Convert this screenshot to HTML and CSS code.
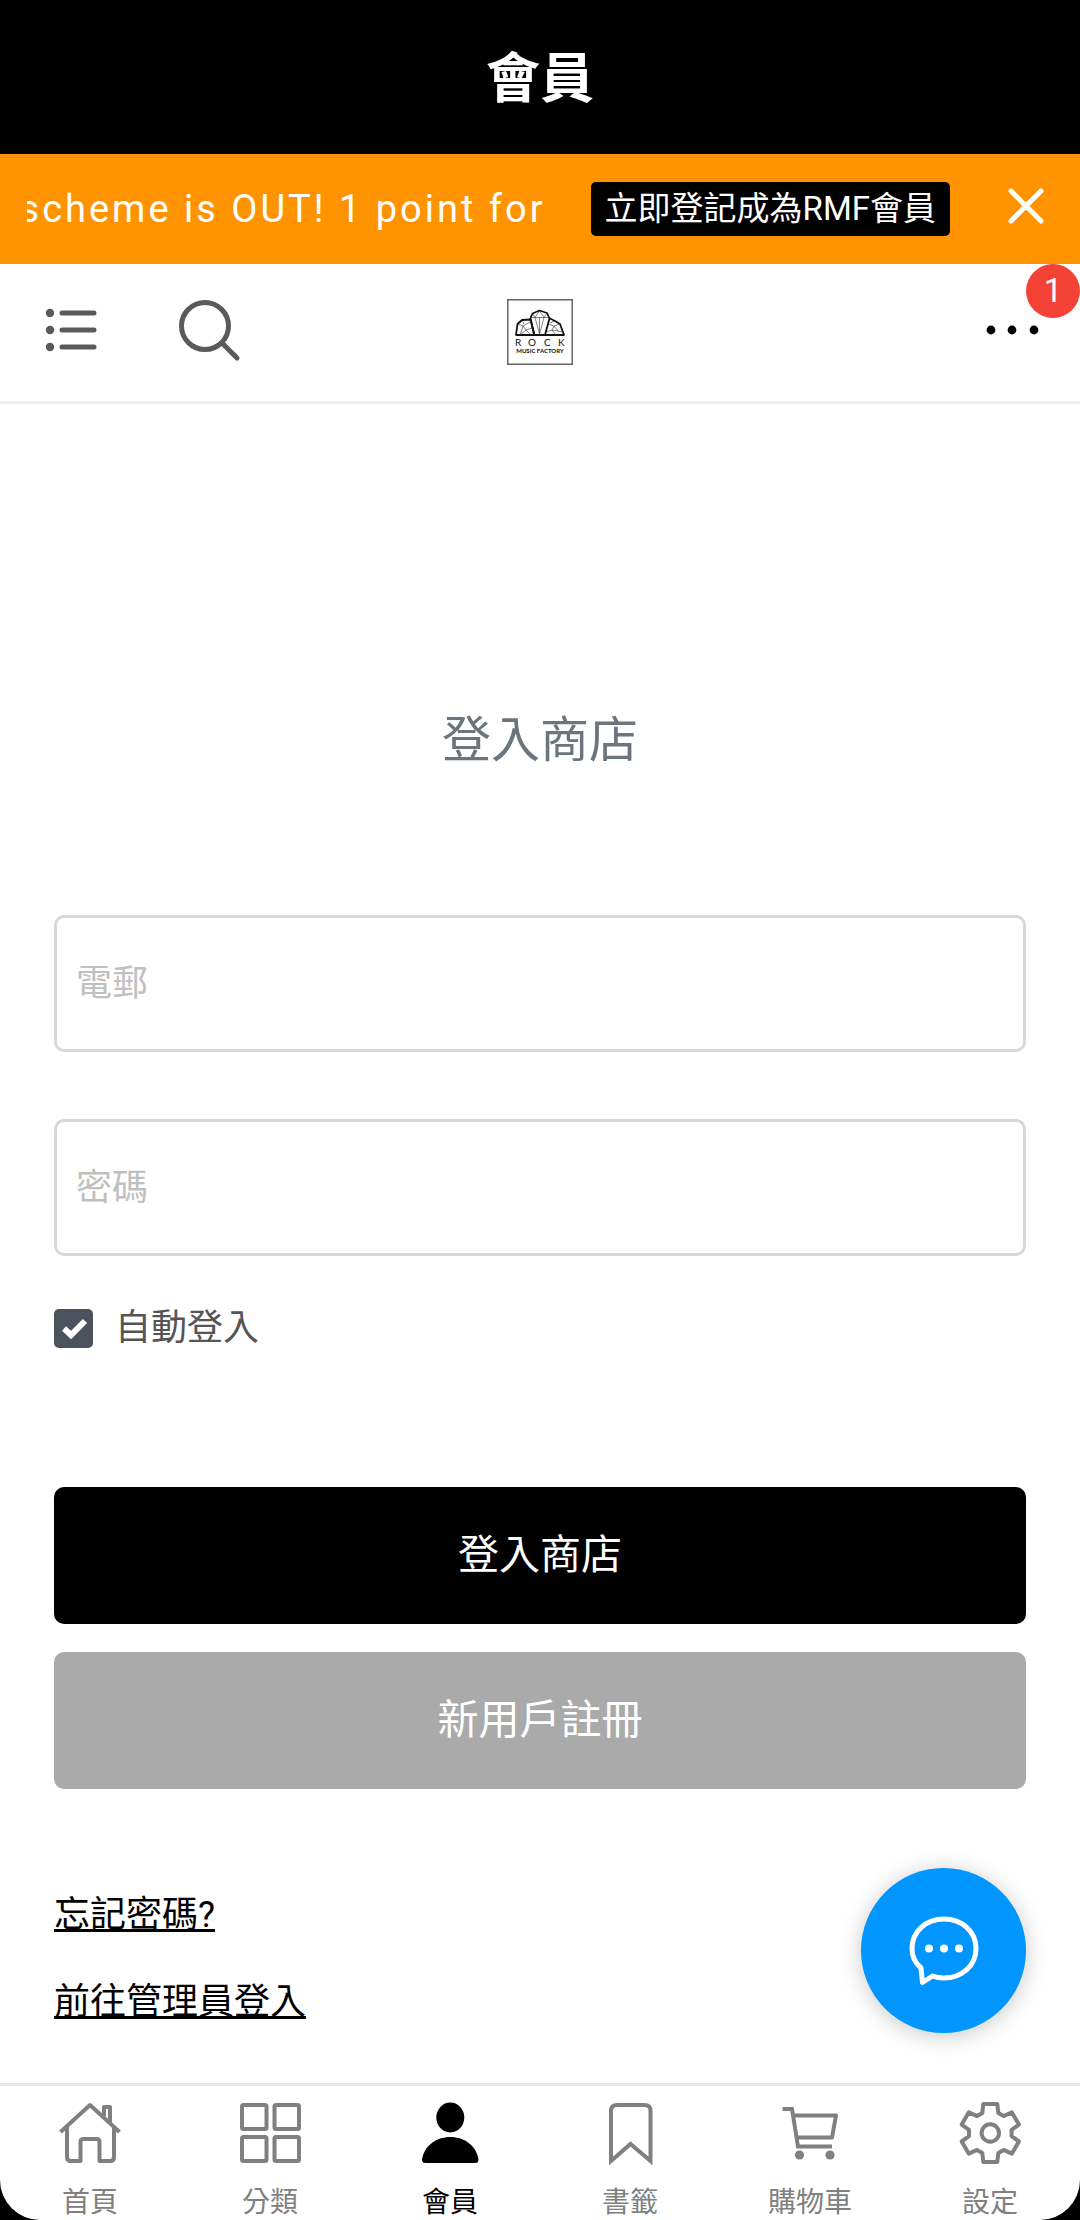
FILE: index.html
```html
<!DOCTYPE html>
<html lang="zh-Hant">
<head>
  <meta charset="utf-8">
  <meta name="viewport" content="width=device-width, initial-scale=1">
  <title>會員</title>
  <link rel="stylesheet" href="styles.css">
</head>
<body>
  <div class="app">
    <header class="title-bar">
      <h1 class="title">會員</h1>
    </header>

    <section class="promo">
      <div class="promo-ticker"><span class="promo-text">scheme is OUT! 1 point for</span></div>
      <a class="promo-link" href="#">立即登記成為RMF會員</a>
      <button class="icon-button promo-close" type="button" aria-label="關閉">
        <svg width="40" height="40" viewBox="0 0 40 40" fill="none" stroke="#fff" stroke-width="5" stroke-linecap="round"><path d="M5 5 35 35M35 5 5 35"/></svg>
      </button>
    </section>

    <nav class="toolbar">
      <div class="toolbar-side">
        <button class="icon-button" type="button" aria-label="選單">
          <svg width="56" height="64" viewBox="0 0 56 64" fill="#5a5a5a"><g stroke="#5a5a5a" stroke-width="5" stroke-linecap="round"><path d="M19 15h32M19 32h32M19 49h32"/></g><circle cx="7" cy="15" r="4.2"/><circle cx="7" cy="32" r="4.2"/><circle cx="7" cy="49" r="4.2"/></svg>
        </button>
        <button class="icon-button" type="button" aria-label="搜尋">
          <svg width="64" height="64" viewBox="0 0 64 64" fill="none" stroke="#5a5a5a" stroke-width="5" stroke-linecap="round"><circle cx="28" cy="28" r="23.5"/><path d="M45 45 60 60"/></svg>
        </button>
      </div>
      <a class="logo" href="#" aria-label="Rock Music Factory">
        <svg width="66" height="66" viewBox="0 0 66 66">
          <rect x=".8" y=".8" width="64.400" height="64.400" fill="#fff" stroke="#666" stroke-width="1.500"/>
          <g fill="none" stroke="#111" stroke-width="1.800" stroke-linejoin="round">
            <path d="M9 36 10.500 25 15 21 23.500 20.500 27.500 36"/>
            <path d="M27 36 23.500 19 25.500 14.500 32.500 11.500 40 14 42.500 19.500 38 36"/>
            <path d="M42 19 48 22 53 25 57 36"/>
            <path d="M8.500 36H57.500" stroke-width="2"/>
          </g>
          <g fill="none" stroke="#333" stroke-width=".6">
            <path d="M24 18.500H42M28 18.500 32.500 35 37 18.500M25.500 14.500 28 18.500 32.500 12 37 18.500 40 14M32.500 18.500V35"/>
            <path d="M10.500 25 16 27 23 23M16 27 13 36M16 27 19 31 25 29M19 31 13 36M19 31 24 36M15 21 17 25"/>
            <path d="M41 25 47 27 53 25M47 27 45 31 39 33M45 31 49 36M47 27 51 32 56 33M48 22 43 24M45 31 51 32"/>
          </g>
          <g fill="#111" class="logo-text">
            <text class="logo-name" x="8 21 37 51" y="47">ROCK</text>
            <text class="logo-sub" x="33" y="54" text-anchor="middle">MUSIC FACTORY</text>
          </g>
        </svg>
      </a>
      <div class="toolbar-side toolbar-end">
        <button class="icon-button more" type="button" aria-label="更多">
          <svg width="56" height="64" viewBox="0 0 56 64"><circle cx="7" cy="32" r="4.4"/><circle cx="28" cy="32" r="4.4"/><circle cx="50" cy="32" r="4.4"/></svg>
        </button>
        <span class="badge">1</span>
      </div>
    </nav>

    <main class="content">
      <h2 class="heading">登入商店</h2>
      <form class="login">
        <input class="field" type="email" placeholder="電郵" aria-label="電郵">
        <input class="field" type="password" placeholder="密碼" aria-label="密碼">
        <label class="remember"><input class="tick" type="checkbox" checked><span>自動登入</span></label>
        <div class="actions">
          <button class="button" type="submit">登入商店</button>
          <button class="button button-muted" type="button">新用戶註冊</button>
        </div>
      </form>
      <div class="links">
        <a class="link" href="#">忘記密碼?</a>
        <a class="link" href="#">前往管理員登入</a>
      </div>
      <button class="chat" type="button" aria-label="聊天">
        <svg width="72" height="72" viewBox="0 0 72 72" fill="none" stroke="#fff" stroke-width="5" stroke-linejoin="round"><path d="M13 53C7 48 4 41 4 33.500 4 16.500 18 4 36 4s32 12.500 32 29.500S54 63 36 63c-4.500 0-8-.5-11.500-2L14.500 67.500z"/><g fill="#fff" stroke="none"><circle cx="21" cy="33.500" r="4"/><circle cx="36" cy="33.500" r="4"/><circle cx="51" cy="33.500" r="4"/></g></svg>
      </button>
    </main>

    <nav class="tabs">
      <a class="tab" href="#">
        <svg class="tab-icon" viewBox="0 0 64 64"><path d="M2.500 31 32 4 61.500 31M9 26V56q0 4 4 4H22.500V41q0-3 3-3H38.500q3 0 3 3V60H52q4 0 4-4V26M46 15V6H52V21"/></svg>
        <span>首頁</span>
      </a>
      <a class="tab" href="#">
        <svg class="tab-icon" viewBox="0 0 64 64"><rect x="4" y="4" width="24.500" height="24" rx="1.500"/><rect x="36.500" y="4" width="24.500" height="24" rx="1.500"/><rect x="4" y="36" width="24.500" height="24" rx="1.500"/><rect x="36.500" y="36" width="24.500" height="24" rx="1.500"/></svg>
        <span>分類</span>
      </a>
      <a class="tab tab-active" href="#" aria-current="page">
        <svg class="tab-icon tab-icon-solid" viewBox="0 0 64 64"><ellipse cx="32.300" cy="16.500" rx="14" ry="15"/><path d="M7.500 62Q4 62 4 58.500C6 45 18 36 32.300 36S58.500 45 60.500 58.500Q60.500 62 57 62z"/></svg>
        <span>會員</span>
      </a>
      <a class="tab" href="#">
        <svg class="tab-icon" viewBox="0 0 64 64"><path stroke-linejoin="miter" d="M13 60V10Q13 4 19 4H46.500Q52.500 4 52.500 10V60L32.500 43z"/></svg>
        <span>書籤</span>
      </a>
      <a class="tab" href="#">
        <svg class="tab-icon" viewBox="0 0 64 64"><path stroke-linejoin="miter" d="M4.500 8H14L20 45.500H54"/><path d="M16 14.500H58L54 36.500H19"/><g class="tab-dot"><circle cx="21.500" cy="54" r="4.600"/><circle cx="52" cy="54" r="4.600"/></g></svg>
        <span>購物車</span>
      </a>
      <a class="tab" href="#">
        <svg class="tab-icon" viewBox="0 0 64 64"><g transform="translate(32.300 32)"><path d="M-8-20-7-29H7L8-20 13.300-16.900 21.600-20.600 28.600-8.400 21.300-3.100V3.100L28.600 8.400 21.600 20.600 13.300 16.900 8 20 7 29H-7L-8 20-13.300 16.900-21.600 20.600-28.600 8.400-21.300 3.100V-3.100L-28.600-8.400-21.600-20.600-13.300-16.900z"/><circle r="8.700"/></g></svg>
        <span>設定</span>
      </a>
    </nav>
  </div>
</body>
</html>
```

FILE: styles.css
```css
*,
*::before,
*::after {
  box-sizing: border-box;
}

body {
  margin: 0;
  background: #000;
  color: #000;
  font-family: Roboto, "Noto Sans CJK TC", sans-serif;
  font-size: 36px;
}

h1,
h2 {
  margin: 0;
}

button,
input {
  margin: 0;
  font: inherit;
}

a {
  color: inherit;
}

svg {
  display: block;
}

.app {
  display: flex;
  flex-direction: column;
  min-height: 100vh;
  overflow: hidden;
  background: #fff;
  border-radius: 0 0 40px 40px;
}

.title-bar {
  padding: 48px 0 42px;
  background: #000;
  text-align: center;
}

.title {
  color: #fff;
  font-size: 54px;
  font-weight: 700;
  line-height: 64px;
}

.icon-button {
  flex: none;
  padding: 0;
  border: 0;
  background: none;
}

/* Promotion strip */
.promo {
  display: flex;
  align-items: center;
  height: 110px;
  padding: 0 34px 0 27px;
  background: #ff9400;
  color: #fff;
}

.promo-ticker {
  display: flex;
  flex: 1;
  justify-content: flex-end;
  min-width: 0;
  margin-right: 45px;
  overflow: hidden;
  white-space: nowrap;
}

.promo-text {
  flex: none;
  font-size: 38px;
  line-height: 48px;
  letter-spacing: 3px;
}

.promo-link {
  margin-right: 56px;
  padding: 0 14px;
  border-radius: 5px;
  background: #000;
  font-size: 33px;
  line-height: 54px;
  text-decoration: none;
  white-space: nowrap;
}

.promo-close {
  padding-bottom: 7px;
}

/* Shop toolbar */
.toolbar {
  position: relative;
  display: flex;
  align-items: center;
  height: 140px;
  padding: 0 40px 6px;
  border-bottom: 3px solid #eee;
}

.toolbar-side {
  display: flex;
  flex: 1;
  gap: 78px;
  padding-left: 3px;
}

.toolbar-end {
  justify-content: flex-end;
}

.logo {
  padding-top: 4px;
}

.logo-text {
  font-family: Lato, sans-serif;
}

.logo-name {
  font-size: 10px;
}

.logo-sub {
  font-size: 6px;
  font-weight: 700;
}

.badge {
  position: absolute;
  top: 0;
  right: 0;
  width: 54px;
  border-radius: 27px;
  background: #f44336;
  color: #fff;
  font-size: 33px;
  line-height: 54px;
  text-align: center;
}

/* Sign-in form */
.content {
  position: relative;
  flex: 1;
  padding: 309px 54px 61px;
}

.heading {
  color: #6c757d;
  font-size: 49px;
  font-weight: 400;
  line-height: 56px;
  text-align: center;
}

.login {
  display: flex;
  flex-direction: column;
  margin-top: 146px;
}

.field {
  width: 100%;
  height: 137px;
  margin-bottom: 67px;
  padding: 0 19px;
  border: 3px solid #d8d8d8;
  border-radius: 10px;
  background: #fff;
  color: #555;
}

.field + .field {
  margin-bottom: 53px;
}

.field::placeholder {
  color: #c0c0c0;
  opacity: 1;
}

.remember {
  display: flex;
  align-items: center;
  align-self: flex-start;
  gap: 22px;
  color: #555;
  line-height: 39px;
}

.tick {
  width: 39px;
  height: 39px;
  border-radius: 5px;
  background: #4b525c url("data:image/svg+xml,%3Csvg xmlns='http://www.w3.org/2000/svg' viewBox='0 0 39 39'%3E%3Cpath d='M10 19.500 17 26 31 12' fill='none' stroke='%23fff' stroke-width='6'/%3E%3C/svg%3E") center / 100%;
  appearance: none;
}

.actions {
  display: grid;
  gap: 28px;
  margin-top: 139px;
}

.button {
  height: 137px;
  padding: 0 0 10px;
  border: 0;
  border-radius: 10px;
  background: #000;
  color: #fff;
  font-size: 41px;
}

.button-muted {
  background: #aaa;
}

.links {
  display: flex;
  flex-direction: column;
  align-items: flex-start;
  gap: 47px;
  margin-top: 106px;
}

.link {
  line-height: 40px;
  text-decoration: underline;
  text-decoration-skip-ink: none;
  text-decoration-thickness: 3px;
}

.chat {
  position: absolute;
  right: 54px;
  bottom: 50px;
  display: grid;
  place-items: center;
  width: 165px;
  height: 165px;
  padding: 0;
  border: 0;
  border-radius: 50%;
  background: #0095ff;
  box-shadow: 0 3px 22px rgba(0, 0, 0, 0.22);
}

/* Bottom tabs */
.tabs {
  display: grid;
  grid-template-columns: repeat(6, 1fr);
  padding: 15px 0 1px;
  border-top: 3px solid #e8e8e8;
}

.tab {
  display: grid;
  justify-items: center;
  gap: 22px;
  color: #808080;
  font-size: 28px;
  line-height: 32px;
  text-decoration: none;
}

.tab-active {
  color: #000;
}

.tab-icon {
  width: 64px;
  height: 64px;
  fill: none;
  stroke: currentColor;
  stroke-width: 4;
  stroke-linejoin: round;
}

.tab-icon-solid,
.tab-dot {
  fill: currentColor;
  stroke: none;
}
```
